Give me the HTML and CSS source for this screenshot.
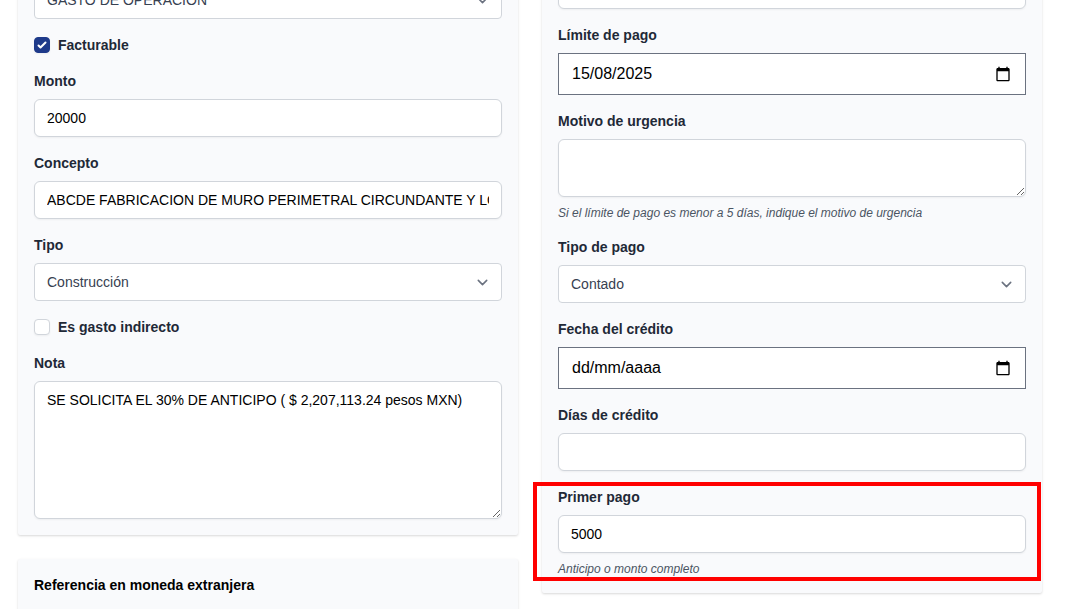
FILE: index.html
```html
<!DOCTYPE html>
<html lang="es">
<head>
<meta charset="utf-8">
<meta name="viewport" content="width=device-width, initial-scale=1">
<title>Solicitud de pago</title>
<link rel="stylesheet" href="styles.css">
</head>
<body>
<form class="page">
  <div class="column column-expense">
    <section class="card">
      <select class="control select" aria-label="Tipo de gasto">
        <option>GASTO DE OPERACIÓN</option>
      </select>
      <label class="check-row"><input class="check" type="checkbox" checked>Facturable</label>
      <div class="field">
        <label class="label" for="monto">Monto</label>
        <input class="control" id="monto" type="text" value="20000">
      </div>
      <div class="field">
        <label class="label" for="concepto">Concepto</label>
        <input class="control" id="concepto" type="text" value="ABCDE FABRICACION DE MURO PERIMETRAL CIRCUNDANTE Y LOSA">
      </div>
      <div class="field">
        <label class="label" for="tipo">Tipo</label>
        <select class="control select" id="tipo"><option>Construcción</option></select>
      </div>
      <label class="check-row"><input class="check" type="checkbox">Es gasto indirecto</label>
      <div class="field">
        <label class="label" for="nota">Nota</label>
        <textarea class="control" id="nota" rows="6">SE SOLICITA EL 30% DE ANTICIPO ( $ 2,207,113.24 pesos MXN)</textarea>
      </div>
    </section>
    <section class="card">
      <h2 class="card-title">Referencia en moneda extranjera</h2>
    </section>
  </div>

  <div class="column column-payment">
    <section class="card">
      <input class="control" type="text" aria-label="Referencia">
      <div class="field">
        <label class="label" for="limite">Límite de pago</label>
        <div class="date">
          <input class="date-input" id="limite" type="text" value="15/08/2025">
          <button class="date-button" type="button" aria-label="Abrir calendario">
            <svg class="date-icon" viewBox="0 0 24 24" aria-hidden="true"><path fill-rule="evenodd" d="M20 3h-1V1h-2v2H7V1H5v2H4c-1.100 0-2 .9-2 2v16c0 1.100.9 2 2 2h16c1.100 0 2-.9 2-2V5c0-1.100-.9-2-2-2zM20 21H4V8h16z"/></svg>
          </button>
        </div>
      </div>
      <div class="field">
        <label class="label" for="motivo">Motivo de urgencia</label>
        <textarea class="control" id="motivo" rows="2" aria-describedby="motivo-ayuda"></textarea>
        <p class="help" id="motivo-ayuda">Si el límite de pago es menor a 5 días, indique el motivo de urgencia</p>
      </div>
      <div class="field">
        <label class="label" for="tipo-pago">Tipo de pago</label>
        <select class="control select" id="tipo-pago"><option>Contado</option></select>
      </div>
      <div class="field">
        <label class="label" for="fecha">Fecha del crédito</label>
        <div class="date">
          <input class="date-input" id="fecha" type="text" placeholder="dd/mm/aaaa">
          <button class="date-button" type="button" aria-label="Abrir calendario">
            <svg class="date-icon" viewBox="0 0 24 24" aria-hidden="true"><path fill-rule="evenodd" d="M20 3h-1V1h-2v2H7V1H5v2H4c-1.100 0-2 .9-2 2v16c0 1.100.9 2 2 2h16c1.100 0 2-.9 2-2V5c0-1.100-.9-2-2-2zM20 21H4V8h16z"/></svg>
          </button>
        </div>
      </div>
      <div class="field">
        <label class="label" for="dias">Días de crédito</label>
        <input class="control" id="dias" type="text">
      </div>
      <div class="field field-marked">
        <label class="label" for="primer-pago">Primer pago</label>
        <input class="control" id="primer-pago" type="text" value="5000" aria-describedby="primer-ayuda">
        <p class="help" id="primer-ayuda">Anticipo o monto completo</p>
      </div>
    </section>
  </div>
</form>
</body>
</html>
```
FILE: styles.css
```css
*, *::before, *::after { box-sizing: border-box; }

body {
  margin: 0;
  height: 100vh;
  overflow: hidden;
  background: #fff;
  color: #000;
  font: 14px/20px "Liberation Sans", Arial, sans-serif;
}

.page {
  display: grid;
  grid-template-columns: 1fr 1fr;
  gap: 24px;
  align-items: start;
  padding: 0 39px 0 18px;
}

.column { display: flex; flex-direction: column; gap: 24px; min-width: 0; }

/* The columns open part-way down the form. */
.column-expense { margin-top: -35px; }
.column-payment { margin-top: -45px; }

.card {
  display: flex;
  flex-direction: column;
  gap: 16px;
  padding: 16px;
  border-radius: 2px;
  background: #f9fafc;
  box-shadow: 0 1px 3px rgba(0, 0, 0, .1), 0 1px 2px rgba(0, 0, 0, .06);
}

.card-title { margin: 0; font-size: 14px; font-weight: 700; }

.field { display: flex; flex-direction: column; gap: 8px; }

.label, .check-row { color: #1f2937; font-weight: 700; }
.label { align-self: flex-start; }

.control {
  display: block;
  width: 100%;
  margin: 0;
  padding: 8px 12px;
  border: 1px solid #d1d5db;
  border-radius: 6px;
  background-color: #fff;
  box-shadow: 0 1px 2px rgba(0, 0, 0, .05);
  color: #000;
  font: inherit;
}

textarea.control { resize: vertical; }

.select {
  appearance: none;
  padding-right: 40px;
  border-radius: 4px;
  box-shadow: none;
  color: #374151;
  background-image: url("data:image/svg+xml,%3Csvg xmlns='http://www.w3.org/2000/svg' fill='none' viewBox='0 0 20 20'%3E%3Cpath stroke='%236b7280' stroke-linecap='round' stroke-linejoin='round' stroke-width='1.5' d='M6 8l4 4 4-4'/%3E%3C/svg%3E");
  background-position: right 8px center;
  background-repeat: no-repeat;
  background-size: 21px 21px;
}

.check-row { display: flex; align-items: center; align-self: flex-start; gap: 8px; }

.check {
  appearance: none;
  width: 16px;
  height: 16px;
  margin: 0;
  border: 1px solid #d1d5db;
  border-radius: 4px;
  background: #fff;
  box-shadow: 0 1px 2px rgba(0, 0, 0, .05);
}

.check:checked {
  border-color: #1e3a8a;
  background: #1e3a8a url("data:image/svg+xml,%3Csvg viewBox='0 0 16 16' fill='white' xmlns='http://www.w3.org/2000/svg'%3E%3Cpath d='M12.207 4.793a1 1 0 010 1.414l-5 5a1 1 0 01-1.414 0l-2-2a1 1 0 011.414-1.414L6.500 9.086l4.293-4.293a1 1 0 011.414 0z'/%3E%3C/svg%3E") center / 16px 16px no-repeat;
}

.date {
  display: flex;
  align-items: center;
  padding: 8px 14px 8px 13px;
  border: 1px solid #6b7280;
  background: #fff;
}

.date-input {
  flex: 1;
  min-width: 0;
  padding: 0;
  border: 0;
  outline: 0;
  background: transparent;
  color: #000;
  font: inherit;
  font-size: 16px;
  line-height: 24px;
}

.date-input::placeholder { color: #000; opacity: 1; }

.date-button { display: flex; padding: 0; border: 0; background: none; }

.date-icon { width: 16px; height: 16px; fill: #000; }

.help { margin: 0; color: #4b5563; font-size: 12px; font-style: italic; line-height: 16px; }

.field-marked { position: relative; }

.field-marked::after {
  content: "";
  position: absolute;
  inset: -5px -15px -4px -25px;
  border: 4px solid #f00;
  pointer-events: none;
}
```
